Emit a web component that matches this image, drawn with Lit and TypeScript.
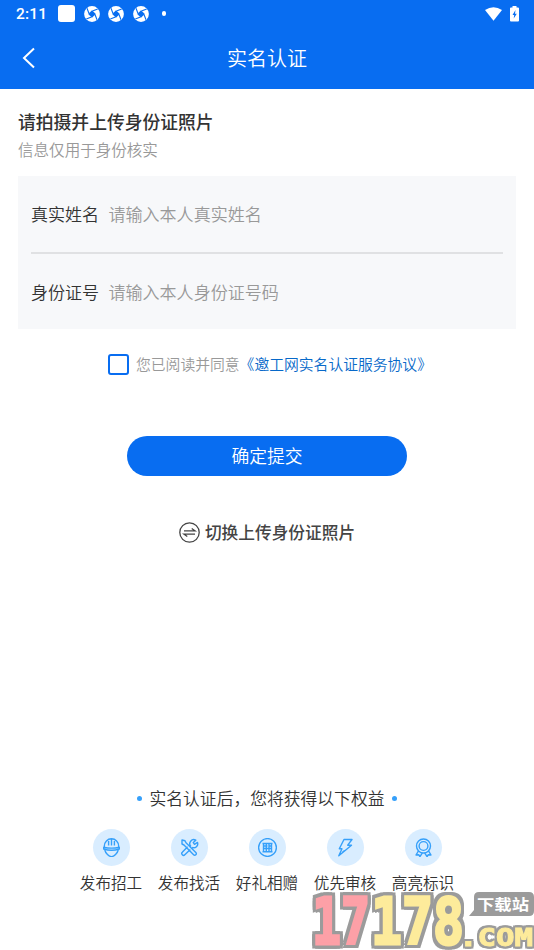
import { LitElement, html, css, svg } from "lit";
import { customElement } from "lit/decorators.js";

const shutter = html`<svg class="shutter" viewBox="0 0 16 16">
  <circle cx="8" cy="8" r="7.9" fill="#fff" />
  <path d="M8 4.200 11.800 8 8 11.800 4.200 8Z" fill="#086df1" />
  <path d="M5 7.500 3 2.300M8.500 5 13.700 3M11 8.500 13 13.700M7.500 11 2.300 13" stroke="#086df1" stroke-width="1.100" fill="none" />
</svg>`;

const benefits = [
  {
    label: "发布招工",
    icon: svg`<path d="M2.300 9.500V8.200C2.300 4 5.500 .8 9.500 .8s7.200 3.200 7.200 7.400v1.300M6.600 3V7.500M9.500 1V7.500M12.400 3V7.500M1.700 9.200Q9.500 11 17.300 9.200V11Q9.500 13.500 1.700 11Z"/><path d="M2.800 12c.7 3.200 4.200 6.600 6.700 6.600s6-3.400 6.700-6.600"/>`,
  },
  {
    label: "发布找活",
    icon: svg`<path d="M2 2l3 .8 1 2 9.800 9.800a1.500 1.500 0 0 1-2.200 2.200L4 7l-2-1ZM7.600 8.700l-5.300 5.600a1.700 1.700 0 0 0 2.500 2.500l5.500-5.400M11 8.500a4 4 0 0 1 4.800-6.300l-2.500 2.400 1.200 1.700 3-1.900a4 4 0 0 1-5.400 5"/>`,
  },
  {
    label: "好礼相赠",
    icon: svg`<circle cx="9.500" cy="9.500" r="8.900"/><path d="M4.500 5.500h10M5 8h4.500M11 8h3M5 10.500h9M4.500 13.800h10M5.500 5.500v8M8.300 5v8.500M11 5v8.500M13.500 5.500v8"/>`,
  },
  {
    label: "优先审核",
    icon: svg`<path d="M8 1.500h8L11.700 7.200h3.800L2.800 17.800 6 10.800H3.300ZM8.500 12.500 6.300 14.500"/>`,
  },
  {
    label: "高亮标识",
    icon: svg`<circle cx="9.500" cy="8" r="7"/><circle cx="9.500" cy="8" r="4.400"/><path d="M4.500 12.800 2 17l2.700-.3 1.200 2 2.500-3.800M14.500 12.800l2.500 4.200-2.700-.3-1.200 2-2.500-3.800"/>`,
  },
];

@customElement("app-root")
export class AppRoot extends LitElement {
  static styles = css`
    :host {
      display: flex;
      flex-direction: column;
      position: relative;
      width: 534px;
      height: 950px;
      overflow: hidden;
      background: #fff;
      color: #333;
      font-family: Roboto, "Noto Sans CJK SC", sans-serif;
      font-weight: 350;
    }
    * { box-sizing: border-box; }
    svg { display: block; flex: none; }
    .top { height: 89px; background: #086df1; color: #fff; }
    .status { display: flex; align-items: center; height: 27px; padding: 0 15px 0 16px; }
    .time { width: 42px; font-size: 15.500px; font-weight: 500; letter-spacing: 0.200px; }
    .square { width: 17px; height: 17px; border-radius: 3px; background: #fff; }
    .shutter { width: 16px; height: 16px; margin-left: 8.500px; }
    .dot { width: 4.500px; height: 4.500px; border-radius: 50%; background: #fff; margin-left: 13px; }
    .wifi { margin-left: auto; }
    .battery { margin-left: 8px; }
    .nav { display: grid; grid-template-columns: 60px 1fr 60px; align-items: center; height: 62px; }
    .back { margin-left: 21px; }
    .nav-title { text-align: center; font-size: 20px; line-height: 30px; padding-top: 2px; }
    .intro { padding: 20px 18px 0; height: 87px; }
    h1 { margin: 0; font-size: 17.800px; line-height: 28px; font-weight: 500; }
    .hint { font-size: 15.550px; line-height: 28px; color: #999; }
    .form { margin: 0 18px; padding: 0 13px; height: 153px; background: #f7f8fa; }
    .row { display: flex; align-items: center; height: 77.500px; font-size: 17.050px; }
    .row + .row { height: 75.500px; }
    .row:first-child { border-bottom: 2px solid #e0e1e3; }
    .label { width: 77.500px; }
    .placeholder { color: #999; }
    .agree { display: flex; align-items: center; margin: 23px 0 0 108px; height: 24px; font-size: 14.800px; color: #999; white-space: nowrap; }
    .agree span:not(.box) { padding-bottom: 2px; }
    .box { width: 21px; height: 21px; border: 2px solid #086df1; border-radius: 3px; margin-right: 7px; }
    .agree .link { color: #0769c9; }
    .submit { align-self: center; width: 280px; height: 40px; margin-top: 60px; border: 0; border-radius: 20px; padding: 0 0 2px; background: #086df1; color: #fff; font: inherit; font-size: 17.800px; }
    .switch { display: flex; align-items: center; align-self: center; gap: 5px; margin-top: 42px; height: 28px; font-size: 16.700px; font-weight: 500; color: #444; }
    .perks { margin-top: auto; height: 168px; }
    .perks-title { display: flex; align-items: center; justify-content: center; gap: 8px; height: 32px; font-size: 16.800px; }
    .bullet { width: 5px; height: 5px; border-radius: 50%; background: #36a0fa; }
    .grid { display: grid; grid-template-columns: repeat(5, 78px); justify-content: center; margin-top: 15px; }
    .perk { display: flex; flex-direction: column; align-items: center; font-size: 15.600px; line-height: 24px; gap: 6px; }
    .disc { display: grid; place-items: center; width: 37px; height: 37px; border-radius: 50%; background: #d9edff; }
    .mark { position: absolute; right: 0; bottom: 0; }
    .digits {
      font: bold 64px "DejaVu Sans Mono", monospace;
      stroke-width: 3px;
      filter: drop-shadow(3px 0 0 #9b9b9b) drop-shadow(-3px 0 0 #9b9b9b) drop-shadow(0 3px 0 #9b9b9b) drop-shadow(0 -3px 0 #9b9b9b);
    }
    .red { fill: #fda0a7; stroke: #fda0a7; }
    .yellow { fill: #fdeb9b; stroke: #fdeb9b; }
    .com {
      font: bold 25px "DejaVu Sans Mono", monospace;
      stroke-width: 1px;
      filter: drop-shadow(2px 0 0 #9b9b9b) drop-shadow(-2px 0 0 #9b9b9b) drop-shadow(0 2px 0 #9b9b9b) drop-shadow(0 -2px 0 #9b9b9b);
    }
    .site { font: bold 15px "Noto Sans CJK SC", sans-serif; fill: #fff; }
  `;

  render() {
    return html`
      <header class="top">
        <div class="status">
          <span class="time">2:11</span><span class="square"></span>
          ${shutter}${shutter}${shutter}<span class="dot"></span>
          <svg class="wifi" width="17" height="14" viewBox="0 0 17 14"><path d="M0 3Q8.500-2.500 17 3L8.500 13.800Z" fill="#fff" /></svg>
          <svg class="battery" width="9" height="16" viewBox="0 0 9 16"><path d="M2.500 0h4v1.500H8q1 0 1 1V14.500q0 1-1 1H1q-1 0-1-1V2.500q0-1 1-1h1.500Z" fill="#fff" /><path d="M5.500 4 2.500 9h1.700L3.700 12.500 6.800 7.700H5Z" fill="#086df1" /></svg>
        </div>
        <div class="nav">
          <svg class="back" width="16" height="22" viewBox="0 0 16 22"><path d="M13 1.500 3 11l10 9.500" fill="none" stroke="#fff" stroke-width="2" /></svg>
          <span class="nav-title">实名认证</span>
        </div>
      </header>
      <section class="intro">
        <h1>请拍摄并上传身份证照片</h1>
        <div class="hint">信息仅用于身份核实</div>
      </section>
      <section class="form">
        <div class="row"><span class="label">真实姓名</span><span class="placeholder">请输入本人真实姓名</span></div>
        <div class="row"><span class="label">身份证号</span><span class="placeholder">请输入本人身份证号码</span></div>
      </section>
      <div class="agree"><span class="box"></span><span>您已阅读并同意</span><span class="link">《邀工网实名认证服务协议》</span></div>
      <button class="submit">确定提交</button>
      <div class="switch">
        <svg width="21" height="21" viewBox="0 0 21 21" fill="none" stroke="#444" stroke-width="1.300"><circle cx="10.500" cy="10.500" r="9.700" /><path d="M5 8.800h11L12.700 6.500M16 12.200H5l3.300 2.300" /></svg>
        <span>切换上传身份证照片</span>
      </div>
      <section class="perks">
        <div class="perks-title"><span class="bullet"></span><span>实名认证后，您将获得以下权益</span><span class="bullet"></span></div>
        <div class="grid">
          ${benefits.map(
            (b) => html`<div class="perk">
              <span class="disc"><svg width="19" height="19" viewBox="0 0 19 19" fill="none" stroke="#36a0fa" stroke-width="1.400" stroke-linejoin="round">${b.icon}</svg></span>
              <span>${b.label}</span>
            </div>`
          )}
        </div>
      </section>
      <svg class="mark" width="224" height="62" viewBox="0 0 224 62">
        <text class="digits red" x="2" y="56" textLength="58" lengthAdjust="spacingAndGlyphs">17</text>
        <text class="digits yellow" x="61" y="56" textLength="93" lengthAdjust="spacingAndGlyphs">178</text>
        <text class="com yellow" x="149" y="58" textLength="74" lengthAdjust="spacingAndGlyphs">.COM</text>
        <path d="M159 28l5-6V9q0-5 5-5h50q5 0 5 5v14q0 5-5 5Z" fill="#9b9b9b" />
        <text class="site" x="167" y="22" textLength="52" lengthAdjust="spacingAndGlyphs">下载站</text>
      </svg>
    `;
  }
}
